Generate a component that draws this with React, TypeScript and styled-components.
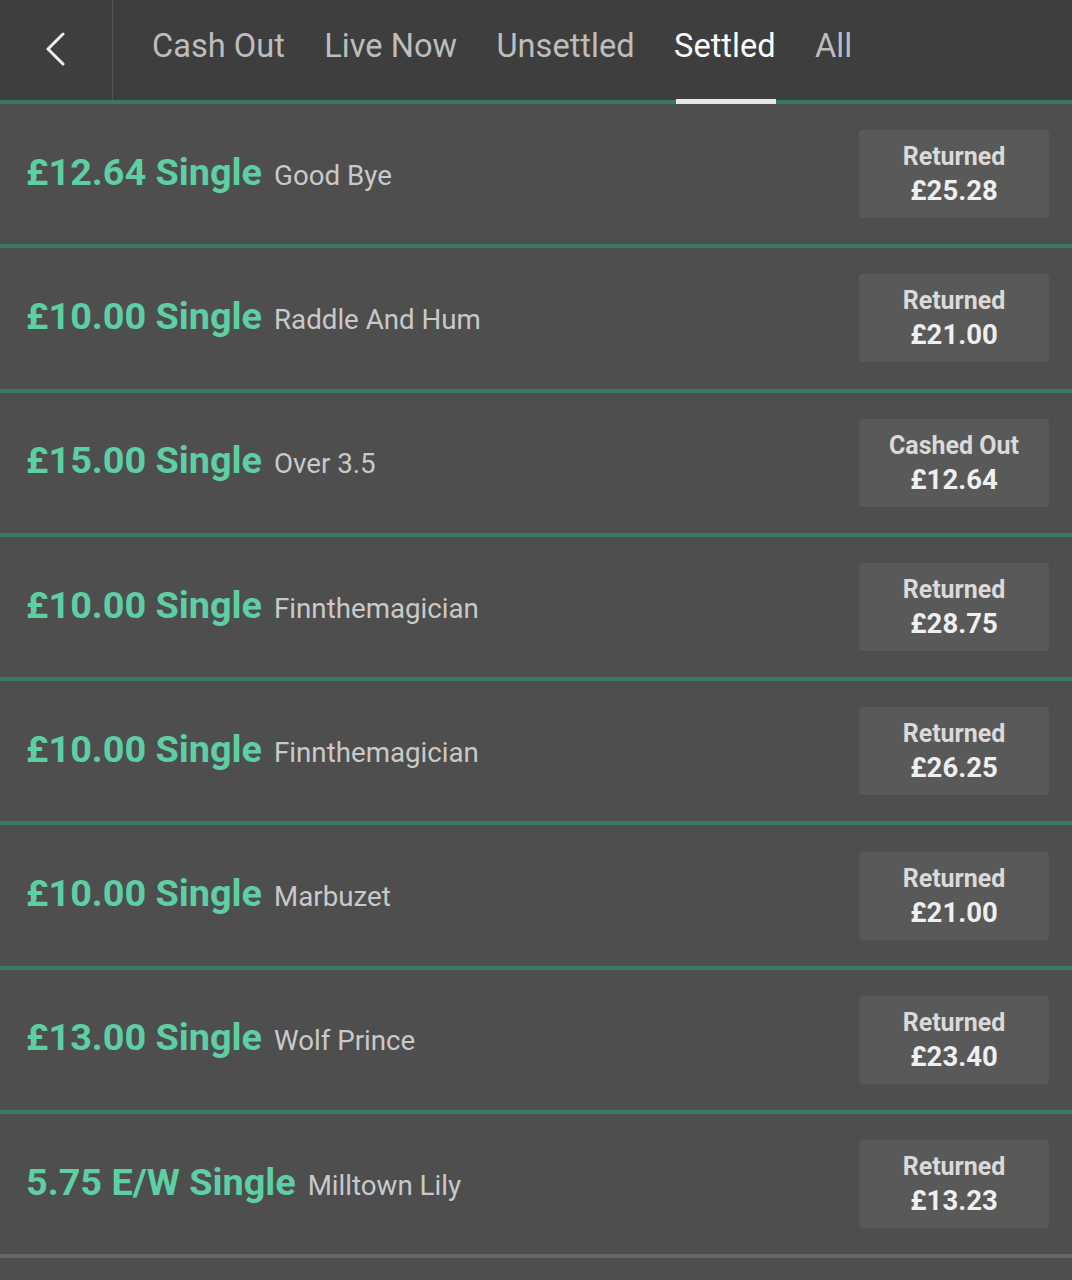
import styled, { createGlobalStyle } from 'styled-components'

type Bet = {
  stake: string
  selection: string
  status: string
  amount: string
}

const bets: Bet[] = [
  { stake: '£12.64 Single', selection: 'Good Bye', status: 'Returned', amount: '£25.28' },
  { stake: '£10.00 Single', selection: 'Raddle And Hum', status: 'Returned', amount: '£21.00' },
  { stake: '£15.00 Single', selection: 'Over 3.5', status: 'Cashed Out', amount: '£12.64' },
  { stake: '£10.00 Single', selection: 'Finnthemagician', status: 'Returned', amount: '£28.75' },
  { stake: '£10.00 Single', selection: 'Finnthemagician', status: 'Returned', amount: '£26.25' },
  { stake: '£10.00 Single', selection: 'Marbuzet', status: 'Returned', amount: '£21.00' },
  { stake: '£13.00 Single', selection: 'Wolf Prince', status: 'Returned', amount: '£23.40' },
  { stake: '5.75 E/W Single', selection: 'Milltown Lily', status: 'Returned', amount: '£13.23' },
]

const tabs = ['Cash Out', 'Live Now', 'Unsettled', 'Settled', 'All']

const GlobalStyle = createGlobalStyle`
  html, body {
    margin: 0;
    padding: 0;
    background: #4e4e4e;
    font-family: Roboto, "Noto Sans", sans-serif;
  }
`

const Page = styled.div`
  min-height: 1280px;
  background: #4e4e4e;
`

const Header = styled.header`
  display: flex;
  height: 100px;
  background: #3e3e3e;
  border-bottom: 4px solid #3a7a62;
`

const BackButton = styled.button`
  width: 113px;
  flex: none;
  display: flex;
  align-items: center;
  justify-content: center;
  padding: 0 0 2px;
  background: transparent;
  border: 0;
  border-right: 1px solid #555;
  color: #f0f0f0;
`

const Tabs = styled.nav`
  display: flex;
  gap: 39.5px;
  padding-left: 39px;
`

const Tab = styled.div<{ $active?: boolean }>`
  position: relative;
  display: flex;
  align-items: center;
  padding-bottom: 8px;
  font-size: 32.6px;
  color: ${({ $active }) => ($active ? '#ffffff' : '#bdbdbd')};

  &::after {
    content: '';
    display: ${({ $active }) => ($active ? 'block' : 'none')};
    position: absolute;
    left: 2px;
    right: 0;
    bottom: -4px;
    height: 5px;
    background: #e8e8e8;
  }
`

const Row = styled.section`
  display: flex;
  align-items: center;
  justify-content: space-between;
  height: 140.3px;
  padding: 0 23px 0 26px;
  background: #4e4e4e;
  border-bottom: 4px solid #3a7a62;
  box-sizing: content-box;

  &:last-child {
    border-bottom-color: #666666;
  }
`

const Title = styled.div`
  display: flex;
  align-items: baseline;
  gap: 12px;
  padding-bottom: 5px;
`

const Stake = styled.span`
  font-size: 37.8px;
  font-weight: 700;
  color: #5dcfa4;
`

const Selection = styled.span`
  font-size: 27.7px;
  color: #c9c9c9;
`

const ResultBox = styled.div`
  width: 190px;
  height: 88px;
  display: flex;
  flex-direction: column;
  align-items: center;
  justify-content: center;
  border-radius: 4px;
  background: #595959;
  color: #e4e4e4;
  font-weight: 700;
  line-height: 34px;
`

const Status = styled.span`
  font-size: 25px;
  color: #dadada;
`

const Amount = styled.span`
  font-size: 27.5px;
  color: #efefef;
`

export default function App() {
  return (
    <Page>
      <GlobalStyle />
      <Header>
        <BackButton aria-label="Back">
          <svg width="24" height="34" viewBox="0 0 24 34" fill="none">
            <path d="M19 2 L4 17 L19 32" stroke="currentColor" strokeWidth="3" strokeLinecap="round" strokeLinejoin="round" />
          </svg>
        </BackButton>
        <Tabs>
          {tabs.map((t) => (
            <Tab key={t} $active={t === 'Settled'}>
              {t}
            </Tab>
          ))}
        </Tabs>
      </Header>
      {bets.map((b, i) => (
        <Row key={i}>
          <Title>
            <Stake>{b.stake}</Stake>
            <Selection>{b.selection}</Selection>
          </Title>
          <ResultBox>
            <Status>{b.status}</Status>
            <Amount>{b.amount}</Amount>
          </ResultBox>
        </Row>
      ))}
    </Page>
  )
}
